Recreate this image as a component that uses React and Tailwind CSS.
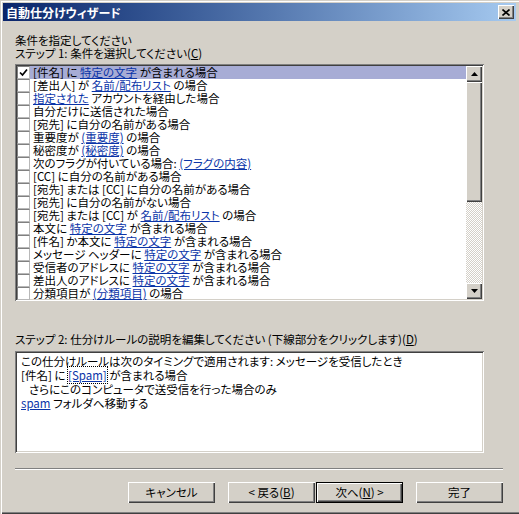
import React from "react";

const ROWS = [
  ["[件名] に ", { link: "特定の文字" }, " が含まれる場合"],
  ["[差出人] が ", { link: "名前/配布リスト" }, " の場合"],
  [{ link: "指定された" }, " アカウントを経由した場合"],
  ["自分だけに送信された場合"],
  ["[宛先] に自分の名前がある場合"],
  ["重要度が ", { link: "(重要度)" }, " の場合"],
  ["秘密度が ", { link: "(秘密度)" }, " の場合"],
  ["次のフラグが付いている場合: ", { link: "(フラグの内容)" }],
  ["[CC] に自分の名前がある場合"],
  ["[宛先] または [CC] に自分の名前がある場合"],
  ["[宛先] に自分の名前がない場合"],
  ["[宛先] または [CC] が ", { link: "名前/配布リスト" }, " の場合"],
  ["本文に ", { link: "特定の文字" }, " が含まれる場合"],
  ["[件名] か本文に ", { link: "特定の文字" }, " が含まれる場合"],
  ["メッセージ ヘッダーに ", { link: "特定の文字" }, " が含まれる場合"],
  ["受信者のアドレスに ", { link: "特定の文字" }, " が含まれる場合"],
  ["差出人のアドレスに ", { link: "特定の文字" }, " が含まれる場合"],
  ["分類項目が ", { link: "(分類項目)" }, " の場合"],
];

const raised =
  "bg-[#d4d0c8] shadow-[inset_1px_1px_0_#ffffff,inset_-1px_-1px_0_#404040,inset_-2px_-2px_0_#808080]";
const sunken =
  "bg-white p-[2px] shadow-[inset_1px_1px_0_#808080,inset_-1px_-1px_0_#ffffff,inset_2px_2px_0_#404040,inset_-2px_-2px_0_#d4d0c8]";

function Seg({ parts }) {
  return parts.map((p, i) =>
    typeof p === "string" ? (
      <span key={i} className="whitespace-pre">
        {p}
      </span>
    ) : (
      <span key={i} className="whitespace-pre text-[#0a34a8] underline underline-offset-[1px]">
        {p.link}
      </span>
    )
  );
}

function CheckBox({ checked }) {
  return (
    <span className="w-[13px] h-[13px] shrink-0 bg-white border border-[#808080] border-r-[#b8b8b8] border-b-[#b8b8b8] flex items-center justify-center">
      {checked && (
        <svg width="9" height="9" viewBox="0 0 9 9">
          <path d="M1 4.5 L3.5 7 L8 1.5" fill="none" stroke="#000" strokeWidth="1.7" />
        </svg>
      )}
    </span>
  );
}

function Arrow({ down }) {
  return (
    <svg width="7" height="4" viewBox="0 0 7 4">
      <polygon points={down ? "0,0 7,0 3.5,4" : "0,4 7,4 3.5,0"} fill="#000" />
    </svg>
  );
}

function Scrollbar() {
  return (
    <div className="w-[16px] flex flex-col shrink-0">
      <div className={`h-[16px] flex items-center justify-center ${raised}`}>
        <Arrow />
      </div>
      <div className={`h-[120px] ${raised}`} />
      <div className="flex-1 bg-[repeating-conic-gradient(#d4d0c8_0%_25%,#ffffff_0%_50%)] bg-[length:2px_2px]" />
      <div className={`h-[16px] flex items-center justify-center ${raised}`}>
        <Arrow down />
      </div>
    </div>
  );
}

function Btn({ children, primary, className = "" }) {
  return (
    <div
      className={`w-[87px] h-[21px] flex items-center justify-center text-black ${raised} ${
        primary ? "outline outline-1 outline-black -outline-offset-1 shadow-[inset_2px_2px_0_#ffffff,inset_-2px_-2px_0_#404040,inset_-3px_-3px_0_#808080]" : ""
      } ${className}`}
    >
      {children}
    </div>
  );
}

export default function App() {
  return (
    <div className="w-[519px] h-[514px] bg-[#d4d0c8] p-[3px] flex flex-col text-[11.5px] leading-[13px] text-black font-['Noto_Sans_CJK_JP','Liberation_Sans',sans-serif] [font-feature-settings:'palt'] shadow-[inset_1px_1px_0_#d4d0c8,inset_2px_2px_0_#ffffff,inset_0_-1px_0_#404040,inset_0_-2px_0_#808080]">
      <div className="h-[18px] flex items-center justify-between pl-[3px] pr-[2px] bg-gradient-to-r from-[#0a246a] to-[#a6caf0]">
        <span className="text-white font-bold text-[12px]">自動仕分けウィザード</span>
        <div className={`w-[16px] h-[14px] flex items-center justify-center ${raised}`}>
          <svg width="8" height="7" viewBox="0 0 8 7">
            <path d="M0.5 0.5 L7.5 6.5 M7.5 0.5 L0.5 6.5" stroke="#000" strokeWidth="1.6" />
          </svg>
        </div>
      </div>

      <div className="px-[12px] flex flex-col">
        <p className="mt-[13px]">条件を指定してください</p>
        <p>
          ステップ 1: 条件を選択してください(<span className="underline">C</span>)
        </p>

        <div className={`mt-[4px] w-[469px] h-[237px] flex ${sunken}`}>
          <div className="flex-1 flex flex-col">
            {ROWS.map((parts, i) => (
              <div
                key={i}
                className={`h-[13px] flex items-center gap-[3px] whitespace-nowrap ${
                  i === 0 ? "bg-[#a7acd5]" : ""
                }`}
              >
                <CheckBox checked={i === 0} />
                <span className="flex">
                  <Seg parts={parts} />
                </span>
              </div>
            ))}
          </div>
          <Scrollbar />
        </div>

        <p className="mt-[32px]">
          ステップ 2: 仕分けルールの説明を編集してください (下線部分をクリックします)(
          <span className="underline">D</span>)
        </p>

        <div className={`mt-[5px] w-[469px] h-[102px] leading-[14px] ${sunken}`}>
          <div className="pl-[4px] pt-[1px]">
            <p>この仕分けルールは次のタイミングで適用されます: メッセージを受信したとき</p>
            <p className="whitespace-pre">
              [件名] に{" "}
              <span className="text-[#0a34a8] underline outline outline-1 outline-dotted outline-black">
                [Spam]
              </span>{" "}
              が含まれる場合
            </p>
            <p className="pl-[8px]">さらにこのコンピュータで送受信を行った場合のみ</p>
            <p>
              <span className="text-[#0a34a8] underline">spam</span> フォルダへ移動する
            </p>
          </div>
        </div>

        <div className="mt-[15px] mr-[1px] h-[2px] border-t border-t-[#808080] border-b border-b-white" />

        <div className="mt-[12px] mr-[1px] flex justify-end">
          <Btn>キャンセル</Btn>
          <Btn className="ml-[13px]">
            &lt; 戻る(<span className="underline">B</span>)
          </Btn>
          <Btn primary className="ml-[1px]">
            次へ(<span className="underline">N</span>) &gt;
          </Btn>
          <Btn className="ml-[13px]">完了</Btn>
        </div>
      </div>
    </div>
  );
}
